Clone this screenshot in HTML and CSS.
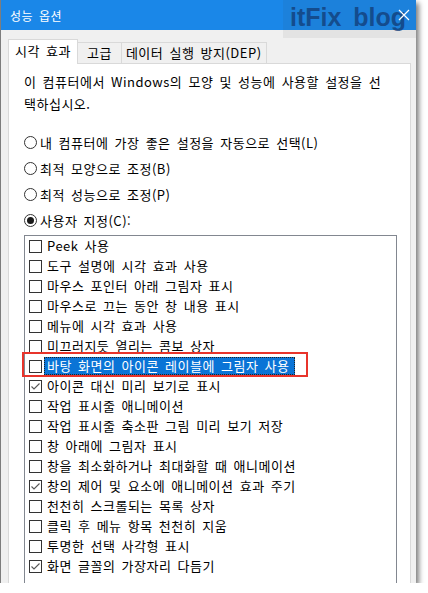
FILE: index.html
```html
<!DOCTYPE html>
<html lang="ko">
<head>
    <meta charset="UTF-8">
    <title>성능 옵션</title>
    <link rel="stylesheet" href="styles.css">
</head>
<body>
    <div class="window">
        <div class="titlebar">
            <span class="title">성능 옵션</span>
            <div class="watermark">itFix blog</div>
            <svg class="close" width="12" height="12" viewBox="0 0 12 12">
                <path d="M1 1 L11 11 M11 1 L1 11" stroke="#fff" stroke-width="1.2" fill="none"/>
            </svg>
        </div>

        <div class="tabs">
            <div class="tab active">시각 효과</div>
            <div class="tab tab-adv">고급</div>
            <div class="tab tab-dep">데이터 실행 방지(DEP)</div>
        </div>

        <div class="panel">
            <p class="intro">이 컴퓨터에서 Windows의 모양 및 성능에 사용할 설정을 선 택하십시오.</p>

            <div class="radios">
                <div class="radio"><span class="circle"></span>내 컴퓨터에 가장 좋은 설정을 자동으로 선택(L)</div>
                <div class="radio"><span class="circle"></span>최적 모양으로 조정(B)</div>
                <div class="radio"><span class="circle"></span>최적 성능으로 조정(P)</div>
                <div class="radio"><span class="circle on"></span>사용자 지정(C):</div>
            </div>

            <ul class="effects">
                <li><span class="box"></span><span class="label">Peek 사용</span></li>
                <li><span class="box"></span><span class="label">도구 설명에 시각 효과 사용</span></li>
                <li><span class="box"></span><span class="label">마우스 포인터 아래 그림자 표시</span></li>
                <li><span class="box"></span><span class="label">마우스로 끄는 동안 창 내용 표시</span></li>
                <li><span class="box"></span><span class="label">메뉴에 시각 효과 사용</span></li>
                <li><span class="box"></span><span class="label">미끄러지듯 열리는 콤보 상자</span></li>
                <li class="marked"><span class="box"></span><span class="label selected">바탕 화면의 아이콘 레이블에 그림자 사용</span><span class="mark"></span></li>
                <li><span class="box checked"></span><span class="label">아이콘 대신 미리 보기로 표시</span></li>
                <li><span class="box"></span><span class="label">작업 표시줄 애니메이션</span></li>
                <li><span class="box"></span><span class="label">작업 표시줄 축소판 그림 미리 보기 저장</span></li>
                <li><span class="box"></span><span class="label">창 아래에 그림자 표시</span></li>
                <li><span class="box"></span><span class="label">창을 최소화하거나 최대화할 때 애니메이션</span></li>
                <li><span class="box checked"></span><span class="label">창의 제어 및 요소에 애니메이션 효과 주기</span></li>
                <li><span class="box"></span><span class="label">천천히 스크롤되는 목록 상자</span></li>
                <li><span class="box"></span><span class="label">클릭 후 메뉴 항목 천천히 지움</span></li>
                <li><span class="box"></span><span class="label">투명한 선택 사각형 표시</span></li>
                <li><span class="box checked"></span><span class="label">화면 글꼴의 가장자리 다듬기</span></li>
            </ul>
        </div>
    </div>
</body>
</html>
```

FILE: styles.css
```css
body {
    margin: 0;
    background-color: #fff;
    font-family: "Noto Sans CJK KR", "Noto Sans", sans-serif;
    font-size: 13px;
    letter-spacing: 0.5px;
    word-spacing: 2px;
    color: #000;
    overflow: hidden;
}
.window {
    width: 416px;
    height: 583px;
    background-color: #f0f0f0;
    border-left: 1px solid #7d7d7d;
    box-sizing: border-box;
    box-shadow: 3px 3px 5px rgba(0,0,0,0.5);
    display: flex;
    flex-direction: column;
    overflow: hidden;
}
.titlebar {
    position: relative;
    height: 30px;
    flex-shrink: 0;
    background-color: #1a87e8;
    color: #fff;
    display: flex;
    align-items: center;
    padding-left: 9px;
}
.title {
    font-size: 12px;
}
.watermark {
    position: absolute;
    top: 0;
    right: 0;
    width: 126px;
    height: 38px;
    padding-left: 7px;
    background-color: rgba(60,60,60,0.07);
    font-family: "Liberation Sans", Arial, sans-serif;
    font-weight: bold;
    font-size: 25px;
    line-height: 34px;
    letter-spacing: 0;
    word-spacing: 5px;
    white-space: nowrap;
    color: rgba(18,62,120,0.8);
}
.close {
    position: relative;
    margin-left: auto;
    margin-right: 6px;
}
.tabs {
    display: flex;
    align-items: flex-end;
    height: 33px;
    padding-left: 7px;
    flex-shrink: 0;
}
.tab {
    height: 20px;
    line-height: 20px;
    padding: 0 4px;
    background-color: #f0f0f0;
    border: 1px solid #d9d9d9;
    border-bottom: none;
    margin-left: -1px;
    white-space: nowrap;
}
.tab:first-child {
    margin-left: 0;
}
.tab.active {
    position: relative;
    height: 24px;
    line-height: 22px;
    padding: 0 6px;
    margin-bottom: -1px;
    background-color: #fff;
    z-index: 1;
}
.tab-adv {
    padding: 0 9px;
}
.panel {
    flex: 1;
    margin: 0 5px 0 7px;
    background-color: #fff;
    border: 1px solid #d9d9d9;
    border-bottom: none;
    padding: 7px 12px 0 15px;
}
.intro {
    margin: 0;
    line-height: 22px;
}
.radios {
    margin-top: 14px;
}
.radio {
    height: 26px;
    display: flex;
    align-items: center;
}
.circle {
    width: 13px;
    height: 13px;
    box-sizing: border-box;
    border: 1px solid #333;
    border-radius: 50%;
    margin-right: 3px;
    display: flex;
    align-items: center;
    justify-content: center;
}
.circle.on::after {
    content: "";
    width: 7px;
    height: 7px;
    border-radius: 50%;
    background-color: #1a1a1a;
}
.effects {
    list-style: none;
    margin: 2px 0 0 0;
    padding: 0;
    width: 373px;
    box-sizing: border-box;
    border: 1px solid #828790;
    border-bottom: none;
    height: 400px;
}
.effects li {
    height: 20px;
    display: flex;
    align-items: center;
    white-space: nowrap;
}
.box {
    width: 13px;
    height: 13px;
    box-sizing: border-box;
    border: 1px solid #333;
    margin: 0 2px 0 4px;
    flex-shrink: 0;
    background-color: #fff;
}
.box.checked {
    background: #fff url("data:image/svg+xml;utf8,<svg xmlns='http://www.w3.org/2000/svg' width='11' height='11' viewBox='0 0 11 11'><path d='M1.5 5.5 L4 8 L9.5 2.5' stroke='%23555' stroke-width='1.1' fill='none'/></svg>") no-repeat center;
}
.label {
    padding: 0 3px;
    line-height: 18px;
    height: 18px;
}
.label.selected {
    padding-right: 5px;
    background-color: #0a74d6;
    color: #fff;
    outline: 1px dotted #222;
    outline-offset: -1px;
}
.marked {
    position: relative;
}
.mark {
    position: absolute;
    left: -3px;
    top: -4px;
    width: 286px;
    height: 25px;
    box-sizing: border-box;
    border: 2px solid #e8342b;
}
```
